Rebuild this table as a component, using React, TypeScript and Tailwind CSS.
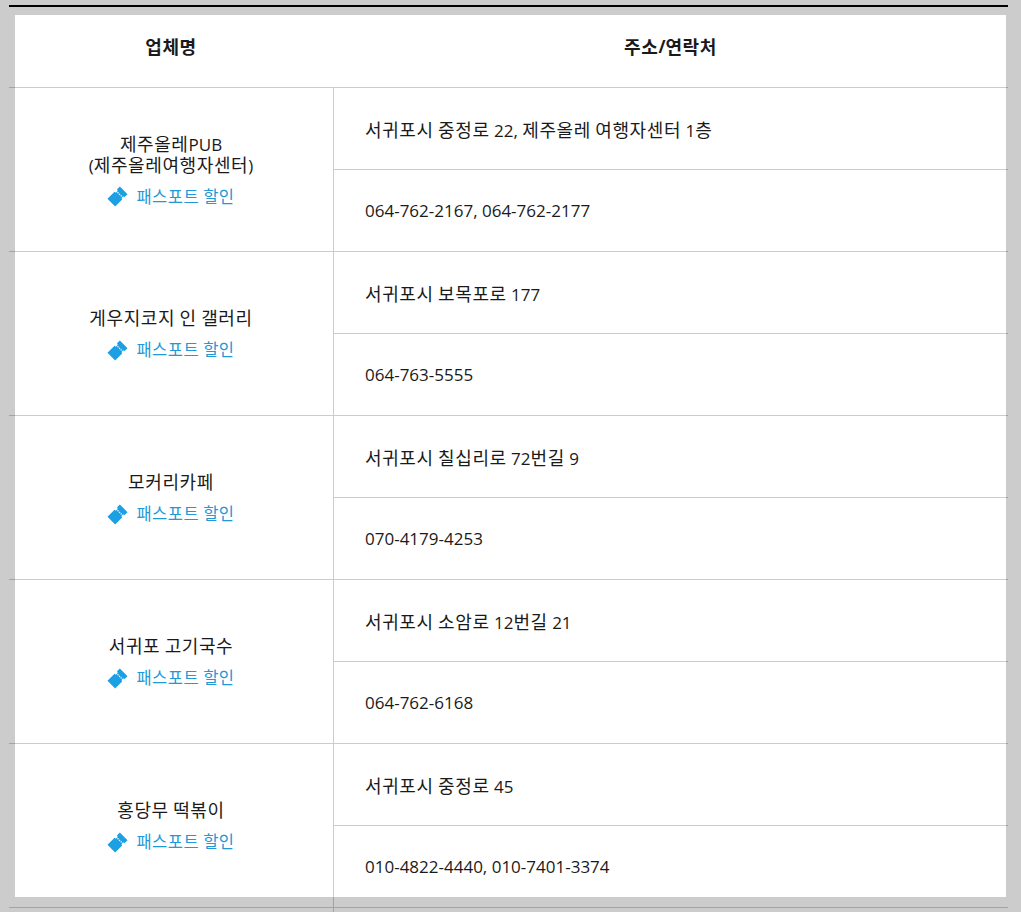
const rows = [
  {
    name: ["제주올레PUB", "(제주올레여행자센터)"],
    address: "서귀포시 중정로 22, 제주올레 여행자센터 1층",
    phone: "064-762-2167, 064-762-2177",
  },
  { name: ["게우지코지 인 갤러리"], address: "서귀포시 보목포로 177", phone: "064-763-5555" },
  { name: ["모커리카페"], address: "서귀포시 칠십리로 72번길 9", phone: "070-4179-4253" },
  { name: ["서귀포 고기국수"], address: "서귀포시 소암로 12번길 21", phone: "064-762-6168" },
  { name: ["홍당무 떡볶이"], address: "서귀포시 중정로 45", phone: "010-4822-4440, 010-7401-3374" },
];

// hangul runs are drawn a bit bigger so they take the width of the original font
function Ko({ text, small }: { text: string; small?: boolean }) {
  const parts = text.split(/([가-힣]+)/);
  const hangul = small ? "text-[16.5px] tracking-[0.5px]" : "text-[18px] tracking-[0.6px]";
  return (
    <>
      {parts.map((p, i) =>
        /[가-힣]/.test(p) ? (
          <span key={i} className={hangul}>
            {p}
          </span>
        ) : (
          <span key={i}>{p}</span>
        )
      )}
    </>
  );
}

function TicketIcon() {
  return (
    <svg width="21" height="21" viewBox="0 0 24 24" aria-hidden="true">
      <g transform="rotate(-45 12 12)">
        <path
          d="M2 5.8h11.4a2 2 0 0 0 4 0h4.6v12.4h-4.6a2 2 0 0 0-4 0h-11.4z"
          fill="#1d9fe4"
        />
        <path d="M15.4 8.6v6.8" stroke="#fff" strokeWidth="1.4" strokeDasharray="1.5 1.1" />
      </g>
    </svg>
  );
}

function PassportLink() {
  return (
    <a href="#" className="mt-[9px] flex items-center gap-[8px] text-[15.5px] leading-[24px] text-[#2299d6]">
      <TicketIcon />
      <span>
        <Ko text="패스포트 할인" small />
      </span>
    </a>
  );
}

export default function App() {
  return (
    <div className="h-[912px] w-[1021px] overflow-hidden bg-[#cccccc] bg-[image:linear-gradient(#fff,#fff)] bg-no-repeat bg-[position:15px_15px] bg-[length:991px_882px] pl-[9px] pt-[5px] font-['Open_Sans','Noto_Sans_CJK_KR',sans-serif] text-[#1a1a1a]">
      <div className="w-[999px] border-t-2 border-black">
        <div className="flex h-[81px] border-b border-black/20 text-[17px] font-bold">
          <div className="flex w-[324px] items-center justify-center">
            <Ko text="업체명" />
          </div>
          <div className="flex flex-1 items-center justify-center">
            <Ko text="주소/연락처" />
          </div>
        </div>

        {rows.map((row) => (
          <div key={row.address} className="flex h-[164px] border-b border-black/20">
            <div className="flex w-[324px] flex-col items-center justify-center pt-[3px] text-center text-[17px] leading-[20px]">
              {row.name.map((line) => (
                <div key={line}>
                  <Ko text={line} />
                </div>
              ))}
              <PassportLink />
            </div>
            <div className="flex flex-1 flex-col border-l border-black/20 text-[17px]">
              <div className="flex h-[82px] items-center border-b border-black/20 pl-[31px] pt-[3px]">
                <span>
                  <Ko text={row.address} />
                </span>
              </div>
              <div className="flex flex-1 items-center pl-[31px] pt-[1px]">{row.phone}</div>
            </div>
          </div>
        ))}

        <div className="flex h-[20px]">
          <div className="w-[324px]" />
          <div className="flex-1 border-l border-black/20" />
        </div>
      </div>
    </div>
  );
}
